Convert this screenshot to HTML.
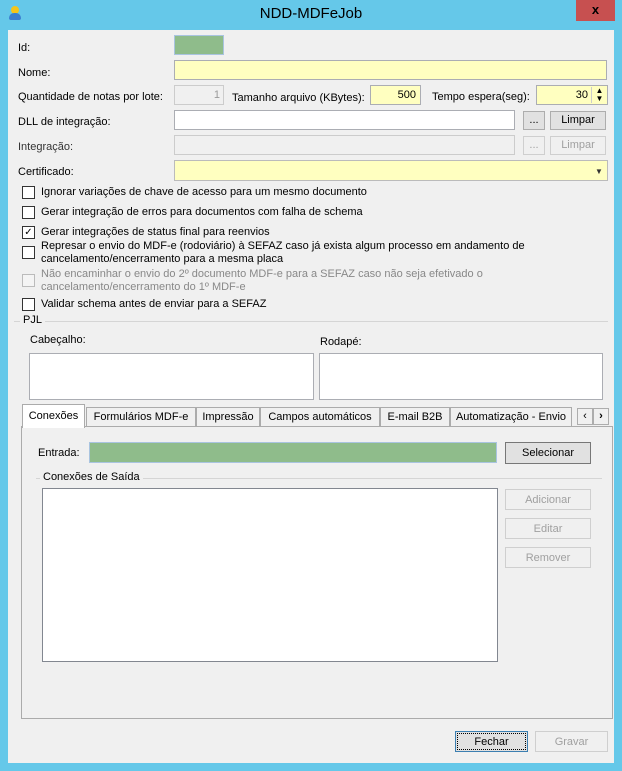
<!DOCTYPE html><html><head><style>
body{margin:0;width:622px;height:771px;background:#65c8e9;font-family:"Liberation Sans",sans-serif;font-size:11px;color:#000;position:relative;overflow:hidden}
.a{position:absolute}
#c{position:absolute;left:8px;top:30px;width:606px;height:733px;background:#f0f0f0}
.t{position:absolute;white-space:nowrap;line-height:16px}
.i{position:absolute;border:1px solid #abadb3;background:#fff;box-sizing:border-box}
.y{background:#ffffc0}
.g{background:#8fbc8b}
.d{background:#f0f0f0;border-color:#ccc}
.b{position:absolute;border:1px solid #adadad;background:#e1e1e1;box-sizing:border-box;text-align:center;line-height:17px;white-space:nowrap}
.bd{color:#a0a0a0;background:#f0f0f0;border-color:#cfcfcf}
.cb{position:absolute;width:11px;height:11px;border:1px solid #333;background:#fff}
.cbd{border-color:#bbb;background:#f4f4f4}
.tab{position:absolute;top:407px;height:20px;border:1px solid #ababab;background:#f0f0f0;box-sizing:border-box;line-height:19px;text-align:center;white-space:nowrap;overflow:hidden}
</style></head><body>
<div class="t" style="left:0;width:622px;top:6px;text-align:center;font-size:15px">NDD-MDFeJob</div>
<div class="a" style="left:11px;top:6px;width:8px;height:8px;border-radius:50%;background:#f5c518"></div>
<div class="a" style="left:9px;top:13px;width:12px;height:7px;border-radius:5px 5px 2px 2px;background:#3a7fd0"></div>
<div class="a" style="left:576px;top:0;width:39px;height:21px;background:#c75050;color:#000;text-align:center;font-weight:bold;font-size:13px;line-height:20px">x</div>
<div id="c"></div>
<div class="t" style="left:18px;top:40px">Id:</div>
<div class="i g" style="left:174px;top:35px;width:50px;height:20px;border-color:#a9c4e0"></div>
<div class="t" style="left:18px;top:65px">Nome:</div>
<div class="i y" style="left:174px;top:60px;width:433px;height:20px"></div>
<div class="t" style="left:18px;top:89px">Quantidade de notas por lote:</div>
<div class="i d" style="left:174px;top:85px;width:50px;height:20px;text-align:right;color:#999;padding-right:3px;line-height:18px">1</div>
<div class="t" style="left:232px;top:90px">Tamanho arquivo (KBytes):</div>
<div class="i y" style="left:370px;top:85px;width:51px;height:20px;text-align:right;padding-right:4px;line-height:19px">500</div>
<div class="t" style="left:432px;top:89px">Tempo espera(seg):</div>
<div class="i y" style="left:536px;top:85px;width:72px;height:20px;text-align:right;padding-right:19px;line-height:19px">30</div>
<div class="a" style="left:591px;top:87px;width:15px;height:16px;border-left:1px solid #ccc;font-size:8px;line-height:8px;text-align:center">▲<br>▼</div>
<div class="t" style="left:18px;top:114px">DLL de integração:</div>
<div class="i" style="left:174px;top:110px;width:341px;height:20px"></div>
<div class="b" style="left:523px;top:111px;width:22px;height:19px">...</div>
<div class="b" style="left:550px;top:111px;width:56px;height:19px">Limpar</div>
<div class="t" style="left:18px;top:139px;color:#333">Integração:</div>
<div class="i d" style="left:174px;top:135px;width:341px;height:20px"></div>
<div class="b bd" style="left:523px;top:136px;width:22px;height:19px">...</div>
<div class="b bd" style="left:550px;top:136px;width:56px;height:19px">Limpar</div>
<div class="t" style="left:18px;top:164px">Certificado:</div>
<div class="i y" style="left:174px;top:160px;width:434px;height:21px;border-color:#bbb"></div>
<div class="a" style="left:595px;top:167px;font-size:8px;color:#333">▼</div>
<div class="cb" style="left:22px;top:186px"></div><div class="t" style="left:41px;top:184px">Ignorar variações de chave de acesso para um mesmo documento</div>
<div class="cb" style="left:22px;top:206px"></div><div class="t" style="left:41px;top:204px">Gerar integração de erros para documentos com falha de schema</div>
<div class="cb" style="left:22px;top:226px;font-size:10px;line-height:11px;text-align:center">✓</div><div class="t" style="left:41px;top:224px">Gerar integrações de status final para reenvios</div>
<div class="cb" style="left:22px;top:246px"></div><div class="t" style="left:41px;top:240px;line-height:13px">Represar o envio do MDF-e (rodoviário) à SEFAZ caso já exista algum processo em andamento de<br>cancelamento/encerramento para a mesma placa</div>
<div class="cb cbd" style="left:22px;top:274px"></div><div class="t" style="left:41px;top:268px;line-height:13px;color:#888">Não encaminhar o envio do 2º documento MDF-e para a SEFAZ caso não seja efetivado o<br>cancelamento/encerramento do 1º MDF-e</div>
<div class="cb" style="left:22px;top:298px"></div><div class="t" style="left:41px;top:296px">Validar schema antes de enviar para a SEFAZ</div>
<div class="a" style="left:14px;top:321px;width:594px;border-top:1px solid #d5d5d5"></div>
<div class="t" style="left:20px;top:312px;background:#f0f0f0;padding:0 3px">PJL</div>
<div class="t" style="left:30px;top:332px">Cabeçalho:</div>
<div class="t" style="left:320px;top:334px">Rodapé:</div>
<div class="i" style="left:29px;top:353px;width:285px;height:47px"></div>
<div class="i" style="left:319px;top:353px;width:284px;height:47px"></div>
<div class="a" style="left:21px;top:426px;width:592px;height:293px;border:1px solid #ababab;background:#f0f0f0;box-sizing:border-box"></div>
<div class="tab" style="left:22px;top:404px;height:24px;width:63px;background:#fff;border-bottom:none;line-height:22px">Conexões</div>
<div class="tab" style="left:86px;width:110px">Formulários MDF-e</div>
<div class="tab" style="left:196px;width:64px">Impressão</div>
<div class="tab" style="left:260px;width:120px">Campos automáticos</div>
<div class="tab" style="left:380px;width:70px">E-mail B2B</div>
<div class="tab" style="left:450px;width:122px">Automatização - Envio</div>
<div class="b" style="left:577px;top:408px;width:16px;height:17px;background:#f0f0f0;line-height:15px">‹</div>
<div class="b" style="left:593px;top:408px;width:16px;height:17px;background:#f0f0f0;line-height:15px;font-weight:bold">›</div>
<div class="t" style="left:38px;top:445px">Entrada:</div>
<div class="i g" style="left:89px;top:442px;width:408px;height:21px;border-color:#a9c4e0"></div>
<div class="b" style="left:505px;top:442px;width:86px;height:22px;line-height:21px;border-color:#777">Selecionar</div>
<div class="a" style="left:36px;top:478px;width:566px;border-top:1px solid #d5d5d5"></div>
<div class="t" style="left:40px;top:469px;background:#f0f0f0;padding:0 3px">Conexões de Saída</div>
<div class="i" style="left:42px;top:488px;width:456px;height:174px;border-color:#828790"></div>
<div class="b bd" style="left:505px;top:489px;width:86px;height:21px;line-height:20px">Adicionar</div>
<div class="b bd" style="left:505px;top:518px;width:86px;height:21px;line-height:20px">Editar</div>
<div class="b bd" style="left:505px;top:547px;width:86px;height:21px;line-height:20px">Remover</div>
<div class="b" style="left:455px;top:731px;width:73px;height:21px;line-height:20px;border:1px solid #3c7fb1;outline:1px dotted #000;outline-offset:-3px">Fechar</div>
<div class="b bd" style="left:535px;top:731px;width:73px;height:21px;line-height:20px">Gravar</div>
</body></html>
